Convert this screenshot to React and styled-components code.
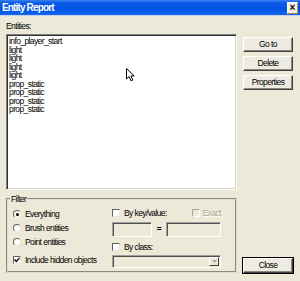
import React from 'react';
import styled, { createGlobalStyle } from 'styled-components';

const Global = createGlobalStyle`
  html, body { margin: 0; padding: 0; background: #ECE9D8; }
  * { box-sizing: border-box; }
`;

const Win = styled.div`
  position: relative;
  width: 300px;
  height: 281px;
  background: #ECE9D8;
  display: flex;
  flex-direction: column;
  font-family: "Liberation Sans", Arial, sans-serif;
  font-size: 8.5px;
  letter-spacing: -0.6px;
  color: #000;
  overflow: hidden;
`;

const TitleBar = styled.div`
  height: 16px;
  display: flex;
  align-items: center;
  justify-content: space-between;
  padding: 0 2px 1px 2px;
  background: linear-gradient(#3C82F4 0%, #0C5BE8 18%, #0054E3 55%, #0A5EEC 85%, #1866EA 100%);
  border-bottom: 1px solid #C4D4F0;
`;

const Title = styled.span`
  color: #fff;
  font-weight: bold;
  font-size: 10px;
  letter-spacing: -0.85px;
`;

const XBox = styled.span`
  width: 11px;
  height: 12px;
  margin-top: 1px;
  display: flex;
  align-items: center;
  justify-content: center;
  background: #F4F1E4;
  border: 1px solid;
  border-color: #fff #B08A50 #B08A50 #fff;
  font-weight: bold;
  font-size: 10px;
  letter-spacing: 0;
  line-height: 1;
`;

const Body = styled.div`
  flex: 1;
  display: grid;
  grid-template-columns: 231px 50px;
  column-gap: 6px;
  padding: 0 7px 8px 6px;
  align-items: stretch;
`;

const MainCol = styled.div`
  display: flex;
  flex-direction: column;
`;

const Label = styled.div`
  margin-top: 6px;
  line-height: 9px;
  height: 9px;
  margin-bottom: 3px;
`;

const ListBox = styled.div`
  height: 156px;
  background: #fff;
  border: 1px solid;
  border-color: #808080 #fff #fff #808080;
  box-shadow: inset 1px 1px 0 #303030, inset -1px -1px 0 #D4D0C8;
  padding: 2px 2px;
`;

const Item = styled.div`
  line-height: 8.5px;
  height: 8.5px;
  white-space: nowrap;
`;

const Group = styled.fieldset`
  margin: 4px 0 0;
  padding: 3px 14px 3px 5px;
  border: 2px groove #E0DDCE;
  min-width: 0;
`;

const Legend = styled.legend`
  padding: 0 1px;
  margin-left: -3px;
  line-height: 10px;
`;

const GroupGrid = styled.div`
  display: grid;
  grid-template-columns: 99px 1fr;
`;

const Stack = styled.div`
  display: flex;
  flex-direction: column;
`;

const OptRow = styled.div`
  display: flex;
  align-items: center;
  gap: 4px;
  white-space: nowrap;
  height: ${p => p.$h || 14}px;
  margin-top: ${p => p.$mt || 0}px;
`;

const Radio = styled.span`
  position: relative;
  width: 8px;
  height: 8px;
  border-radius: 50%;
  background: #fff;
  border: 1px solid;
  border-color: #606060 #E8E6DC #E8E6DC #606060;
  flex: none;
  &::after {
    content: '';
    display: ${p => (p.$on ? 'block' : 'none')};
    position: absolute;
    left: 1.5px;
    top: 1.5px;
    width: 3px;
    height: 3px;
    border-radius: 50%;
    background: #000;
  }
`;

const Check = styled.span`
  width: 8px;
  height: 8px;
  flex: none;
  display: flex;
  align-items: center;
  justify-content: center;
  background: ${p => (p.$disabled ? '#ECE9D8' : '#fff')};
  border: 1px solid;
  border-color: ${p => (p.$disabled ? '#ACA899 #fff #fff #ACA899' : '#606060 #E8E6DC #E8E6DC #606060')};
`;

const Dim = styled.span`
  color: #ACA899;
  text-shadow: 1px 1px 0 #fff;
`;

const KVRow = styled.div`
  display: flex;
  align-items: center;
  height: 12px;
`;

const ExactWrap = styled.span`
  margin-left: auto;
  display: flex;
  align-items: center;
  gap: 3px;
`;

const InputRow = styled.div`
  display: flex;
  align-items: center;
  margin-top: 3px;
  height: 15px;
`;

const Field = styled.span`
  display: block;
  height: 15px;
  width: ${p => (p.$w ? `${p.$w}px` : 'auto')};
  flex: ${p => (p.$w ? 'none' : '1')};
  background: #ECE9D8;
  border: 1px solid;
  border-color: #A0A0A0 #fff #fff #A0A0A0;
  box-shadow: inset 1px 1px 0 #505050;
`;

const Eq = styled.span`
  width: 14px;
  text-align: center;
  font-weight: bold;
  line-height: 1;
`;

const Select = styled.span`
  margin-top: 2px;
  height: 13px;
  display: flex;
  justify-content: flex-end;
  background: #ECE9D8;
  border: 1px solid;
  border-color: #A0A0A0 #fff #fff #A0A0A0;
  box-shadow: inset 1px 1px 0 #505050;
  padding: 1px;
`;

const Arrow = styled.span`
  width: 10px;
  height: 100%;
  display: flex;
  align-items: center;
  justify-content: center;
  background: #ECE9D8;
  border: 1px solid;
  border-color: #fff #404040 #404040 #fff;
`;

const SideCol = styled.div`
  display: flex;
  flex-direction: column;
  gap: 4px;
  padding-top: 21px;
`;

const Btn = styled.div`
  height: 15px;
  display: flex;
  align-items: center;
  justify-content: center;
  background: #EEECE2;
  border: 1px solid;
  border-color: #fff #404040 #404040 #fff;
  box-shadow: inset -1px -1px 0 #8C8A80, ${p => (p.$default ? '0 0 0 1px #000' : '0 0 0 0 transparent')};
  margin-top: ${p => (p.$bottom ? 'auto' : '0')};
  line-height: 1;
`;

const Cursor = styled.svg`
  position: absolute;
  left: 126px;
  top: 68px;
`;

const items = [
  'info_player_start',
  'light',
  'light',
  'light',
  'light',
  'prop_static',
  'prop_static',
  'prop_static',
  'prop_static',
];

export default function App() {
  return (
    <>
      <Global />
      <Win>
        <TitleBar>
          <Title>Entity Report</Title>
          <XBox>×</XBox>
        </TitleBar>
        <Body>
          <MainCol>
            <Label>Entities:</Label>
            <ListBox>
              {items.map((t, i) => (
                <Item key={i}>{t}</Item>
              ))}
            </ListBox>
            <Group>
              <Legend>Filter</Legend>
              <GroupGrid>
                <Stack>
                  <OptRow>
                    <Radio $on />
                    <span>Everything</span>
                  </OptRow>
                  <OptRow>
                    <Radio />
                    <span>Brush entities</span>
                  </OptRow>
                  <OptRow>
                    <Radio />
                    <span>Point entities</span>
                  </OptRow>
                  <OptRow $mt={4}>
                    <Check>
                      <svg width="6" height="6" viewBox="0 0 6 6">
                        <path d="M0.5 2.5 L2.3 4.5 L5.5 0.8" stroke="#000" strokeWidth="1.2" fill="none" />
                      </svg>
                    </Check>
                    <span>Include hidden objects</span>
                  </OptRow>
                </Stack>
                <Stack>
                  <KVRow>
                    <OptRow $h={12}>
                      <Check />
                      <span>By key/value:</span>
                    </OptRow>
                    <ExactWrap>
                      <Check $disabled />
                      <Dim>Exact</Dim>
                    </ExactWrap>
                  </KVRow>
                  <InputRow>
                    <Field $w={40} />
                    <Eq>=</Eq>
                    <Field />
                  </InputRow>
                  <OptRow $h={12} $mt={4}>
                    <Check />
                    <span>By class:</span>
                  </OptRow>
                  <Select>
                    <Arrow>
                      <svg width="5" height="3" viewBox="0 0 5 3">
                        <path d="M0 0 L5 0 L2.5 3 Z" fill="#ACA899" />
                      </svg>
                    </Arrow>
                  </Select>
                </Stack>
              </GroupGrid>
            </Group>
          </MainCol>
          <SideCol>
            <Btn>Go to</Btn>
            <Btn>Delete</Btn>
            <Btn>Properties</Btn>
            <Btn $default $bottom>Close</Btn>
          </SideCol>
        </Body>
        <Cursor width="10" height="14" viewBox="0 0 10 14">
          <path d="M0.5 0.5 L0.5 11 L3 8.6 L5 12.8 L6.8 12 L4.9 7.9 L8.2 7.9 Z" fill="#fff" stroke="#000" strokeWidth="1" strokeLinejoin="miter" />
        </Cursor>
      </Win>
    </>
  );
}
